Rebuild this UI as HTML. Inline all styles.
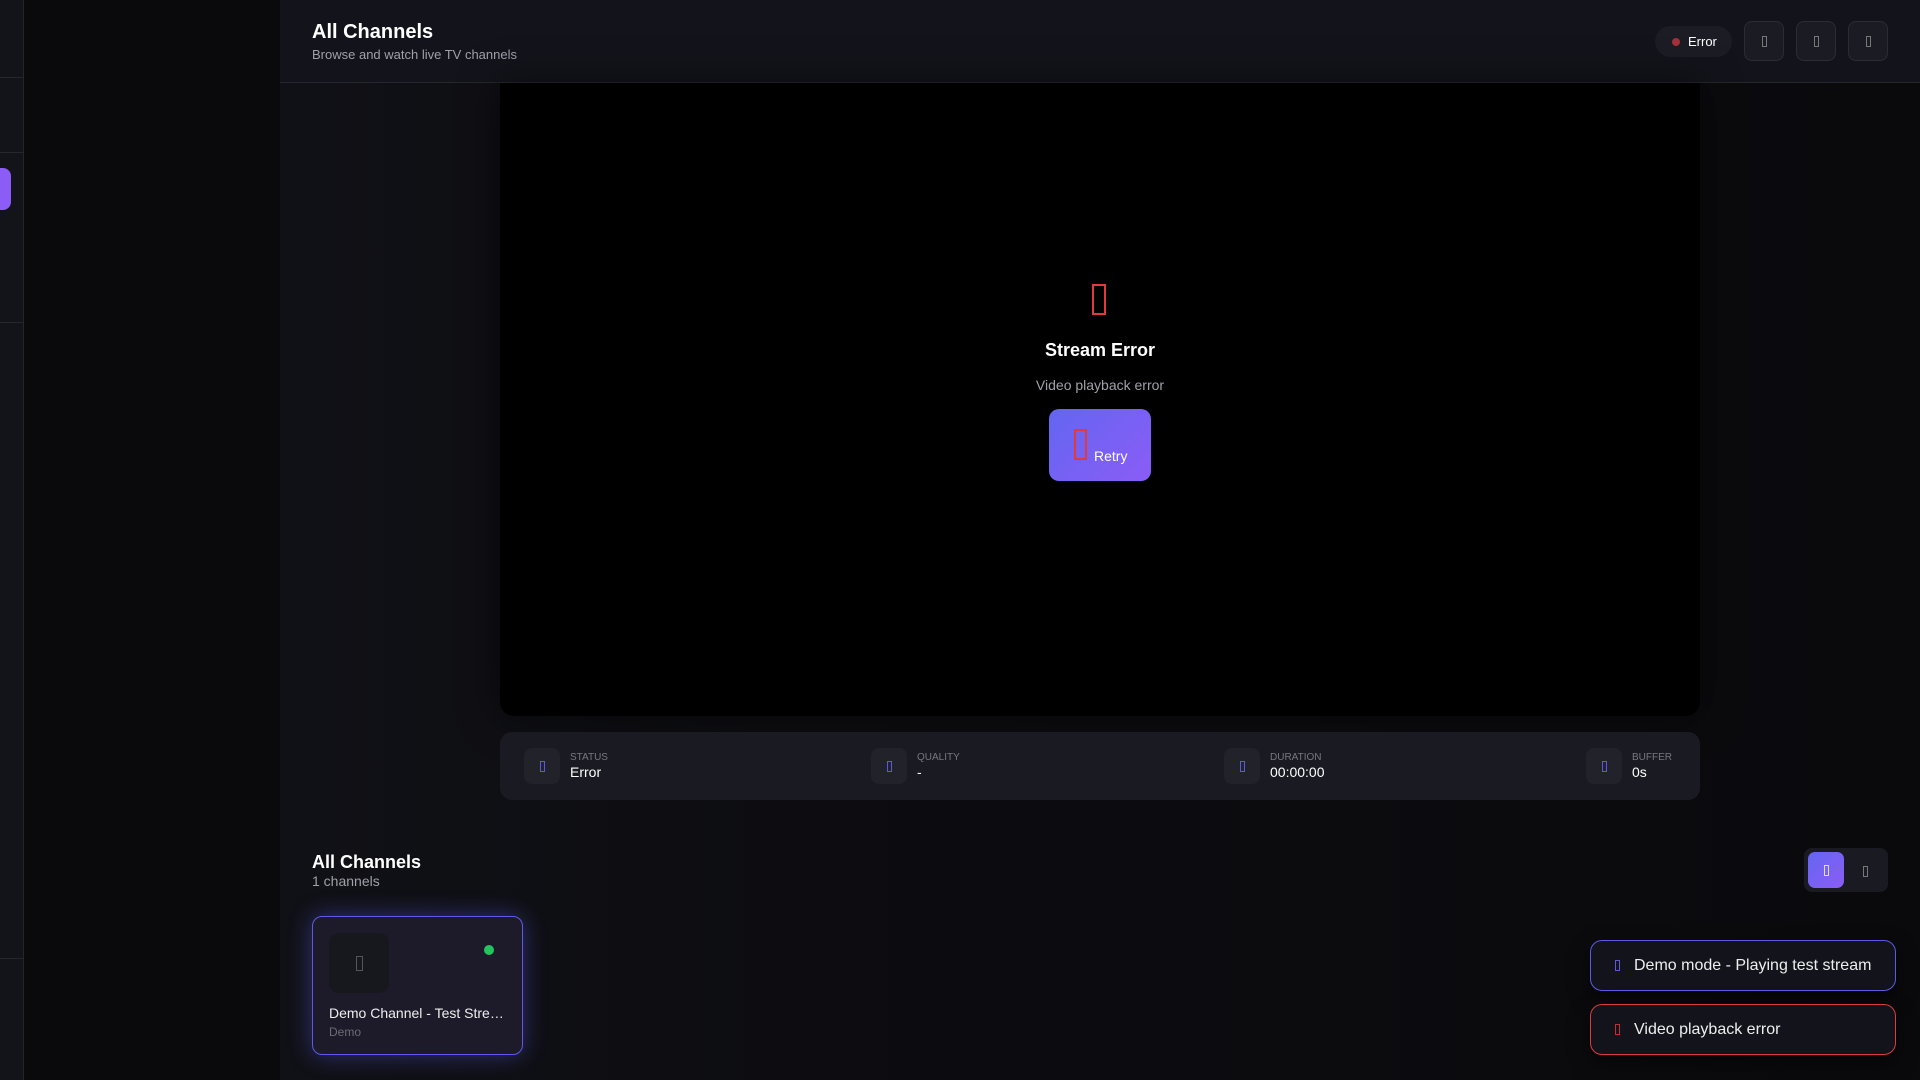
<!DOCTYPE html>
<html><head><meta charset="utf-8"><style>
*{box-sizing:border-box;margin:0;padding:0}
body{width:1920px;height:1080px;overflow:hidden;background:#0a0a0d;font-family:"Liberation Sans",sans-serif;color:#fff;position:relative}
.abs{position:absolute}
.side{left:0;top:0;width:24px;height:1080px;background:#13131a;border-right:1px solid #24242c}
.hl{left:0;width:24px;height:1px;background:#26262e}
.main{left:280px;top:0;width:1640px;height:1080px;background:linear-gradient(90deg,#101116 0%,#0d0d11 30%,#0a0a0d 100%)}
.hdr{left:280px;top:0;width:1640px;height:83px;background:#13131b;border-bottom:1px solid #26262e}
.ib{width:40px;height:40px;border:1px solid #2c2c36;border-radius:8px;background:#1b1b24;color:#777;font-size:12px;display:flex;align-items:center;justify-content:center}
.glyph{display:inline-block;border:1px solid currentColor;width:5px;height:11px}
.stat .box{position:absolute;width:36px;height:36px;border-radius:8px;background:#22222b;display:flex;align-items:center;justify-content:center;color:#5b5bd6}
.lbl{position:absolute;font-size:10px;color:#77777f;text-transform:uppercase}
.val{position:absolute;font-size:14px;color:#fff}
</style></head><body>
<div class="abs main"></div>
<div class="abs side"></div>
<div class="abs hl" style="top:77px"></div>
<div class="abs hl" style="top:152px"></div>
<div class="abs hl" style="top:322px"></div>
<div class="abs hl" style="top:958px"></div>
<div class="abs" style="left:0;top:168px;width:11px;height:42px;background:#8b5cf6;border-radius:0 8px 8px 0"></div>

<div class="abs hdr"></div>
<div class="abs" style="left:312px;top:21px;font-size:20px;font-weight:bold">All Channels</div>
<div class="abs" style="left:312px;top:47px;font-size:13px;color:#a0a0aa">Browse and watch live TV channels</div>
<div class="abs" style="left:1655px;top:26px;width:77px;height:31px;border-radius:16px;background:#1c1c25;font-size:13px;display:flex;align-items:center;padding-left:17px"><span style="width:8px;height:8px;border-radius:50%;background:#a3313a;margin-right:8px"></span>Error</div>
<div class="abs ib" style="left:1744px;top:21px"><span class="glyph"></span></div>
<div class="abs ib" style="left:1796px;top:21px"><span class="glyph"></span></div>
<div class="abs ib" style="left:1848px;top:21px"><span class="glyph"></span></div>

<div class="abs" style="left:500px;top:83px;width:1200px;height:633px;background:#000;border-radius:0 0 14px 14px;box-shadow:0 0 40px rgba(0,0,0,.5)"></div>
<div class="abs" style="left:1092px;top:284px;width:14px;height:31px;border:2px solid #e03a3a"></div>
<div class="abs" style="left:900px;top:340px;width:400px;text-align:center;font-size:18px;font-weight:bold">Stream Error</div>
<div class="abs" style="left:900px;top:377px;width:400px;text-align:center;font-size:14px;color:#a0a0aa">Video playback error</div>
<div class="abs" style="left:1049px;top:409px;width:102px;height:72px;border-radius:10px;background:linear-gradient(135deg,#6366f1,#8b5cf6)"></div>
<div class="abs" style="left:1074px;top:429px;width:13px;height:31px;border:2px solid #e03a3a"></div>
<div class="abs" style="left:1094px;top:448px;font-size:14px">Retry</div>

<div class="abs" style="left:500px;top:732px;width:1200px;height:68px;background:#1a1a22;border-radius:12px"></div>
<div class="stat">
<div class="box" style="left:524px;top:748px"><span class="glyph"></span></div><div class="lbl" style="left:570px;top:752px">Status</div><div class="val" style="left:570px;top:764px">Error</div>
<div class="box" style="left:871px;top:748px"><span class="glyph"></span></div><div class="lbl" style="left:917px;top:752px">Quality</div><div class="val" style="left:917px;top:764px">-</div>
<div class="box" style="left:1224px;top:748px"><span class="glyph"></span></div><div class="lbl" style="left:1270px;top:752px">Duration</div><div class="val" style="left:1270px;top:764px">00:00:00</div>
<div class="box" style="left:1586px;top:748px"><span class="glyph"></span></div><div class="lbl" style="left:1632px;top:752px">Buffer</div><div class="val" style="left:1632px;top:764px">0s</div>
</div>

<div class="abs" style="left:312px;top:852px;font-size:18px;font-weight:bold">All Channels</div>
<div class="abs" style="left:312px;top:873px;font-size:14px;color:#a0a0aa">1 channels</div>
<div class="abs" style="left:312px;top:916px;width:211px;height:139px;border:1px solid #5b5be6;border-radius:10px;background:#1d1b2a;box-shadow:0 0 24px rgba(90,90,240,.45)"></div>
<div class="abs" style="left:329px;top:933px;width:60px;height:60px;border-radius:10px;background:#17171e;color:#555;display:flex;align-items:center;justify-content:center"><span class="glyph" style="width:7px;height:15px"></span></div>
<div class="abs" style="left:484px;top:945px;width:10px;height:10px;border-radius:50%;background:#22c55e"></div>
<div class="abs" style="left:329px;top:1005px;font-size:14px;color:#eee">Demo Channel - Test Stre…</div>
<div class="abs" style="left:329px;top:1025px;font-size:12px;color:#6b6b75">Demo</div>

<div class="abs" style="left:1804px;top:848px;width:84px;height:44px;border-radius:8px;background:#1a1a22"></div>
<div class="abs" style="left:1808px;top:852px;width:36px;height:36px;border-radius:7px;background:linear-gradient(135deg,#6366f1,#8b5cf6);color:#ddd;display:flex;align-items:center;justify-content:center"><span class="glyph"></span></div>
<div class="abs" style="left:1863px;top:864px;color:#777"><span class="glyph"></span></div>

<div class="abs" style="left:1590px;top:940px;width:306px;height:51px;border:1px solid #5b5be6;border-radius:12px;background:#13131b;font-size:16px;display:flex;align-items:center;padding-left:24px;color:#eee;box-shadow:0 8px 20px rgba(0,0,0,.5)"><span class="glyph" style="color:#5b5bd6;margin-right:14px"></span>Demo mode - Playing test stream</div>
<div class="abs" style="left:1590px;top:1004px;width:306px;height:51px;border:1px solid #dc3c3c;border-radius:12px;background:#13131b;font-size:16px;display:flex;align-items:center;padding-left:24px;color:#eee;box-shadow:0 8px 20px rgba(0,0,0,.5)"><span class="glyph" style="color:#c03030;margin-right:14px"></span>Video playback error</div>
</body></html>
